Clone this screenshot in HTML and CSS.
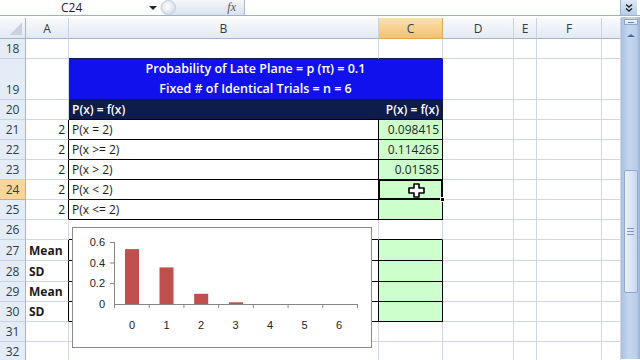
FILE: index.html
```html
<!doctype html>
<html lang="en">

<head>
	<meta charset="utf-8">
	<title>Binomial - Late Plane</title>
	<link rel="stylesheet" href="styles.css">
</head>

<body>
	<div class="formula-bar">
		<div class="name-box">C24</div>
		<div class="name-arrow"></div>
		<div class="fx-box"><span class="fx-knob"></span><span class="fx">fx</span></div>
		<div class="formula-input"></div>
		<div class="expand-btn">
			<svg width="10" height="10" viewBox="0 0 10 10"><path d="M2 1.5 L5 4 L8 1.5 M2 5.5 L5 8 L8 5.5" fill="none" stroke="#222" stroke-width="1.4"/></svg>
		</div>
	</div>
	<div class="workspace">
		<div class="sheet">
			<!-- column headers -->
			<div class="corner"></div>
			<div class="ch">A</div>
			<div class="ch">B</div>
			<div class="ch sel">C</div>
			<div class="ch">D</div>
			<div class="ch">E</div>
			<div class="ch">F</div>
			<div class="ch"></div>
			<!-- 18 -->
			<div class="rh">18</div>
			<div class="c"></div>
			<div class="c navy-line"></div>
			<div class="c navy-line"></div>
			<div class="c"></div><div class="c"></div><div class="c"></div><div class="c"></div>
			<!-- 19 -->
			<div class="rh">19</div>
			<div class="c"></div>
			<div class="c title">
				<span>Probability of Late Plane = p (π) = 0.1</span>
				<span>Fixed # of Identical Trials = n = 6</span>
			</div>
			<div class="c"></div><div class="c"></div><div class="c"></div><div class="c"></div>
			<!-- 20 -->
			<div class="rh">20</div>
			<div class="c"></div>
			<div class="c head">P(x) = f(x)</div>
			<div class="c head num">P(x) = f(x)</div>
			<div class="c"></div><div class="c"></div><div class="c"></div><div class="c"></div>
			<!-- 21 -->
			<div class="rh">21</div>
			<div class="c num edge">2</div>
			<div class="c box">P(x = 2)</div>
			<div class="c box green num">0.098415</div>
			<div class="c"></div><div class="c"></div><div class="c"></div><div class="c"></div>
			<!-- 22 -->
			<div class="rh">22</div>
			<div class="c num edge">2</div>
			<div class="c box">P(x &gt;= 2)</div>
			<div class="c box green num">0.114265</div>
			<div class="c"></div><div class="c"></div><div class="c"></div><div class="c"></div>
			<!-- 23 -->
			<div class="rh">23</div>
			<div class="c num edge">2</div>
			<div class="c box">P(x &gt; 2)</div>
			<div class="c box green num">0.01585</div>
			<div class="c"></div><div class="c"></div><div class="c"></div><div class="c"></div>
			<!-- 24 -->
			<div class="rh sel">24</div>
			<div class="c num edge">2</div>
			<div class="c box">P(x &lt; 2)</div>
			<div class="c box green active">
				<svg class="cursor" width="17" height="15" viewBox="0 0 17 15"><path d="M6 1 H11 V5 H16 V10 H11 V14 H6 V10 H1 V5 H6 Z" fill="#fff" stroke="#000" stroke-width="1.6" stroke-linejoin="round"/></svg>
			</div>
			<div class="c"></div><div class="c"></div><div class="c"></div><div class="c"></div>
			<!-- 25 -->
			<div class="rh">25</div>
			<div class="c num edge">2</div>
			<div class="c box">P(x &lt;= 2)</div>
			<div class="c box green"></div>
			<div class="c"></div><div class="c"></div><div class="c"></div><div class="c"></div>
			<!-- 26 -->
			<div class="rh">26</div>
			<div class="c"></div>
			<div class="c box-top"></div>
			<div class="c box-top"></div>
			<div class="c"></div><div class="c"></div><div class="c"></div><div class="c"></div>
			<!-- 27 -->
			<div class="rh">27</div>
			<div class="c bold edge">Mean</div>
			<div class="c box"></div>
			<div class="c box green"></div>
			<div class="c"></div><div class="c"></div><div class="c"></div><div class="c"></div>
			<!-- 28 -->
			<div class="rh">28</div>
			<div class="c bold edge">SD</div>
			<div class="c box"></div>
			<div class="c box green"></div>
			<div class="c"></div><div class="c"></div><div class="c"></div><div class="c"></div>
			<!-- 29 -->
			<div class="rh">29</div>
			<div class="c bold edge">Mean</div>
			<div class="c box"></div>
			<div class="c box green"></div>
			<div class="c"></div><div class="c"></div><div class="c"></div><div class="c"></div>
			<!-- 30 -->
			<div class="rh">30</div>
			<div class="c bold edge">SD</div>
			<div class="c box"></div>
			<div class="c box green"></div>
			<div class="c"></div><div class="c"></div><div class="c"></div><div class="c"></div>
			<!-- 31 -->
			<div class="rh">31</div>
			<div class="c"></div><div class="c"></div><div class="c"></div>
			<div class="c"></div><div class="c"></div><div class="c"></div><div class="c"></div>
			<!-- 32 -->
			<div class="rh">32</div>
			<div class="c"></div><div class="c"></div><div class="c"></div>
			<div class="c"></div><div class="c"></div><div class="c"></div><div class="c"></div>

			<!-- embedded chart -->
			<div class="chart">
				<svg width="300" height="121" viewBox="0 0 300 121">
					<g class="lbl">
						<text x="33" y="19" text-anchor="end">0.6</text>
						<text x="33" y="39.7" text-anchor="end">0.4</text>
						<text x="33" y="60.3" text-anchor="end">0.2</text>
						<text x="33" y="81" text-anchor="end">0</text>
					</g>
					<g fill="#C0504D">
						<rect x="53" y="22.1" width="14" height="54.9"/>
						<rect x="87.5" y="40.4" width="14" height="36.6"/>
						<rect x="122.2" y="66.8" width="14" height="10.2"/>
						<rect x="157" y="75.3" width="14" height="1.7"/>
					</g>
					<g stroke="#868686" stroke-width="1" fill="none">
						<path d="M42.5 15 V77.5 H285"/>
						<path d="M38 15.5 H42 M38 36 H42 M38 56.5 H42"/>
						<path d="M42.5 77 V81 M77.2 77 V81 M111.9 77 V81 M146.6 77 V81 M181.4 77 V81 M216.1 77 V81 M250.8 77 V81 M285.5 77 V81"/>
					</g>
					<g class="lbl" text-anchor="middle">
						<text x="60" y="102">0</text>
						<text x="94.5" y="102">1</text>
						<text x="129" y="102">2</text>
						<text x="163.5" y="102">3</text>
						<text x="198" y="102">4</text>
						<text x="232.5" y="102">5</text>
						<text x="267" y="102">6</text>
					</g>
				</svg>
			</div>
		</div>
		<div class="vscroll">
			<div class="split-box"></div>
			<div class="up-arrow"></div>
			<div class="track-top"></div>
			<div class="thumb"><span></span><span></span><span></span></div>
		</div>
	</div>
</body>

</html>
```

FILE: styles.css
```css
html,
body {
	margin: 0;
	padding: 0;
	width: 640px;
	height: 360px;
	overflow: hidden;
	background: #fff;
	font-family: "Open Sans", "Liberation Sans", Arial, sans-serif;
	color: #1a1a1a;
}
/* formula bar */
.formula-bar {
	height: 16px;
	display: flex;
	border-bottom: 1px solid #9DB1CB;
	box-sizing: border-box;
	background: #fff;
}
.name-box {
	width: 145px;
	padding: 1px 0 0 61px;
	box-sizing: border-box;
	font-size: 12px;
	line-height: 13px;
	color: #222;
}
.name-arrow {
	width: 15px;
	display: flex;
	align-items: center;
	justify-content: flex-start;
}
.name-arrow::before {
	content: "";
	margin-left: 4px;
	border-left: 4px solid transparent;
	border-right: 4px solid transparent;
	border-top: 4px solid #222;
}
.fx-box {
	width: 85px;
	display: flex;
	align-items: center;
	justify-content: space-between;
	background: linear-gradient(#F4F7FB, #D9E2ED);
	border-radius: 9px 0 0 9px;
	border-right: 1px solid #A9BCD3;
	box-sizing: border-box;
}
.fx-knob {
	width: 13px;
	height: 13px;
	margin-left: 1px;
	border-radius: 50%;
	background: radial-gradient(circle at 40% 40%, #fff, #C9D3DF);
	border: 1px solid #C3CEDB;
}
.fx {
	font-family: "Liberation Serif", serif;
	font-style: italic;
	font-size: 12px;
	color: #555;
	margin-right: 8px;
}
.formula-input {
	flex: 1;
}
.expand-btn {
	width: 16px;
	margin-right: 3px;
	display: flex;
	align-items: center;
	justify-content: center;
	background: linear-gradient(#DDE8F6, #B8CDE8);
	border-left: 1px solid #9DB1CB;
}
/* sheet */
.workspace {
	display: flex;
	margin-top: 2px;
}
.sheet {
	position: relative;
	width: 621px;
	display: grid;
	grid-template-columns: 26px 43px 310px 64px 71px 23px 65px 19px;
	grid-template-rows: 21px 20px 41px 20px 20px 20px 20px 20px 20px 20px 21px 21px 20px 20px 20px 20px;
	font-size: 12px;
}
.sheet>div {
	box-sizing: border-box;
	white-space: nowrap;
}
.corner {
	background:
		linear-gradient(135deg, transparent 50%, #C9D4E2 50%) no-repeat right 3px bottom 3px / 13px 13px,
		linear-gradient(#F7FAFD, #E2E9F2);
	border-right: 1px solid #9EB6CE;
	border-bottom: 1px solid #9EB6CE;
}
.ch {
	display: flex;
	align-items: center;
	justify-content: center;
	background: linear-gradient(#F9FBFD, #E3EAF3);
	border-right: 1px solid #C6D3E3;
	border-bottom: 1px solid #9EB6CE;
	color: #2E3B4E;
	font-size: 12px;
}
.ch.sel {
	background: linear-gradient(#FBE2B0, #F4C06E);
	border-right-color: #E2A94E;
	border-bottom-color: #E2A94E;
}
.rh {
	display: flex;
	align-items: flex-end;
	justify-content: center;
	padding-bottom: 1px;
	background: #E4ECF7;
	border-right: 1px solid #9EB6CE;
	border-bottom: 1px solid #C5D3E5;
	color: #2E3B4E;
	font-size: 12px;
}
.rh.sel {
	background: #F8D69A;
	border-bottom-color: #E2A94E;
}
.c {
	display: flex;
	align-items: flex-end;
	padding: 0 3px 2px 3px;
	border-right: 1px solid #D0D7E5;
	border-bottom: 1px solid #D0D7E5;
	line-height: 15px;
}
.num {
	justify-content: flex-end;
}
.bold {
	font-weight: 700;
}
.edge {
	border-right-color: #000;
}
.navy-line {
	border-bottom-color: #0E1B4D;
}
.box-top {
	border-bottom-color: #000;
}
.title {
	grid-column: span 2;
	flex-direction: column;
	align-items: center;
	justify-content: center;
	padding: 0;
	background: #1111EE;
	color: #fff;
	font-size: 12.5px;
	font-weight: 600;
	border-right-color: #1111EE;
	border-bottom-color: #0E1B4D;
	line-height: 20px;
}
.head {
	background: #0E1B4D;
	color: #fff;
	font-weight: 600;
	border-right-color: #0E1B4D;
	border-bottom-color: #000;
}
.box {
	border-right-color: #000;
	border-bottom-color: #000;
}
.green {
	background: #CCFFCC;
	color: #1d2a1d;
}
.active {
	position: relative;
	justify-content: center;
	align-items: center;
}
.active::after {
	content: "";
	position: absolute;
	left: -1px;
	top: -1px;
	right: -1px;
	bottom: -1px;
	border: 2px solid #000;
}
.active::before {
	content: "";
	position: absolute;
	right: -3px;
	bottom: -3px;
	width: 5px;
	height: 5px;
	background: #000;
	border: 1px solid #fff;
	box-sizing: border-box;
	z-index: 2;
}
.cursor {
	position: absolute;
	left: 29px;
	top: 3px;
	z-index: 3;
}
/* chart */
.chart {
	position: absolute;
	left: 72px;
	top: 209px;
	width: 300px;
	height: 121px;
	background: #fff;
	border: 1px solid #8A8A8A;
	z-index: 4;
}
.chart svg {
	display: block;
	margin: -1px;
}
.lbl {
	font-family: "Liberation Sans", Arial, sans-serif;
	font-size: 11px;
	fill: #222;
}
/* vertical scrollbar */
.vscroll {
	width: 19px;
	height: 342px;
	margin-top: -1px;
	background: linear-gradient(to right, #A8C0E0, #C4D6EE 40%, #BBCFEA 80%, #97B0D6);
	display: flex;
	flex-direction: column;
	align-items: center;
}
.split-box {
	width: 14px;
	height: 6px;
	margin-top: 2px;
	background: linear-gradient(#F2F6FB, #D7E2F0);
	border: 1px solid #8FA8CC;
	box-sizing: border-box;
	display: flex;
	align-items: center;
	justify-content: center;
}
.split-box::after {
	content: "";
	width: 6px;
	height: 1px;
	background: #6D87AE;
}
.up-arrow {
	margin-top: 9px;
	border-left: 4px solid transparent;
	border-right: 4px solid transparent;
	border-bottom: 3px solid #4B6B99;
}
.track-top {
	height: 133px;
}
.thumb {
	width: 14px;
	height: 123px;
	box-sizing: border-box;
	background: linear-gradient(to right, #E9F0F9, #D6E3F3 60%, #C5D6EE);
	border: 1px solid #8EA8CE;
	border-radius: 2px;
	display: flex;
	flex-direction: column;
	align-items: center;
	justify-content: center;
	gap: 2px;
}
.thumb span {
	width: 7px;
	height: 1px;
	background: #7F97BB;
}
```
